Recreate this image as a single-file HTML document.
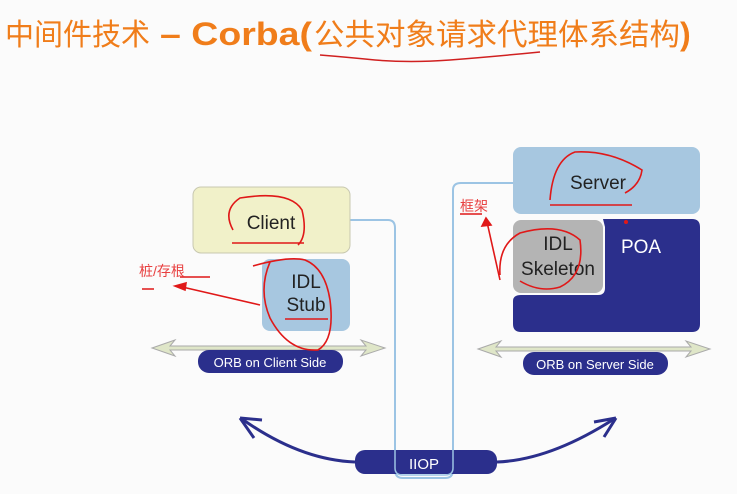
<!DOCTYPE html><html><head><meta charset="utf-8"><style>
body{margin:0;background:#fbfbfb;width:737px;height:494px;overflow:hidden}
svg{display:block}
text{font-family:"Liberation Sans","Noto Sans CJK SC",sans-serif}
</style></head><body>
<svg width="737" height="494" viewBox="0 0 737 494">
<rect width="737" height="494" fill="#fbfbfb"/>
<text x="5" y="45" font-size="30" fill="#f07d1a" textLength="145" lengthAdjust="spacingAndGlyphs">中间件技术</text>
<text x="160" y="45" font-size="32" font-weight="bold" fill="#f07d1a" textLength="152" lengthAdjust="spacingAndGlyphs">– Corba(</text>
<text x="314" y="45" font-size="30" fill="#f07d1a" textLength="366" lengthAdjust="spacingAndGlyphs">公共对象请求代理体系结构</text>
<text x="680" y="45" font-size="32" font-weight="bold" fill="#f07d1a">)</text>
<path d="M320 55 Q345 57 375 60 Q410 63 450 60 Q500 56 540 52" stroke="#d02020" stroke-width="1.5" fill="none"/>
<path d="M350 220 H388 Q395 220 395 228 V470 Q395 478 403 478 H445 Q453 478 453 470 V190 Q453 183 461 183 H515" stroke="#9cc4e4" stroke-width="2" fill="none"/>
<g fill="#dfe6c8" stroke="#aaa" stroke-width="1">
<path d="M152 348 L175 340 L170 346 H366 L361 340 L385 348 L361 356 L366 350 H170 L175 356 Z"/>
<path d="M478 349 L501 341 L496 347 H691 L686 341 L710 349 L686 357 L691 351 H496 L501 357 Z"/>
</g>
<rect x="193" y="187" width="157" height="66" rx="8" fill="#f1f1c9" stroke="#c8c8b0"/>
<text x="271" y="229" font-size="19" text-anchor="middle" fill="#222">Client</text>
<rect x="262" y="259" width="88" height="72" rx="8" fill="#a7c7e0"/>
<text x="306" y="288" font-size="19" text-anchor="middle" fill="#222">IDL</text>
<text x="306" y="311" font-size="19" text-anchor="middle" fill="#222">Stub</text>
<rect x="198" y="350" width="145" height="23" rx="11" fill="#2b2f8c"/>
<text x="270" y="367" font-size="13" text-anchor="middle" fill="#fff">ORB on Client Side</text>
<rect x="513" y="147" width="187" height="67" rx="8" fill="#a7c7e0"/>
<text x="598" y="189" font-size="19" text-anchor="middle" fill="#222">Server</text>
<path d="M603 219 H692 Q700 219 700 227 V324 Q700 332 692 332 H521 Q513 332 513 324 V301 Q513 295 521 295 H598 Q605 295 605 288 V227 Q603 219 603 219 Z" fill="#2b2f8c"/>
<rect x="513" y="220" width="90" height="73" rx="8" fill="#b4b4b4"/>
<text x="558" y="250" font-size="19" text-anchor="middle" fill="#222">IDL</text>
<text x="558" y="275" font-size="19" text-anchor="middle" fill="#222">Skeleton</text>
<text x="641" y="253" font-size="19" text-anchor="middle" fill="#fff">POA</text>
<rect x="523" y="352" width="145" height="23" rx="11" fill="#2b2f8c"/>
<text x="595" y="369" font-size="13" text-anchor="middle" fill="#fff">ORB on Server Side</text>
<path d="M355 462 Q300 460 242 419 M497 462 Q550 460 614 419" stroke="#2b2f8c" stroke-width="3" fill="none"/>
<path d="M240 418 L262 420 M240 418 L254 438 M616 418 L594 422 M616 418 L604 437" stroke="#2b2f8c" stroke-width="3" fill="none"/>
<rect x="355" y="450" width="142" height="24" rx="10" fill="#2b2f8c"/>
<path d="M395 450 V468 Q395 475 403 475 H445 Q453 475 453 468 V450" stroke="#9cc4e4" stroke-width="1.5" fill="none"/>
<text x="424" y="469" font-size="15" text-anchor="middle" fill="#fff">IIOP</text>
<g stroke="#e01818" stroke-width="1.6" fill="none">
<path d="M233 230 Q222 210 240 198 Q290 190 302 210 Q308 235 298 245"/>
<path d="M232 243 H304"/>
<path d="M270 262 Q258 290 270 318 Q288 352 318 350 Q335 340 330 300 Q325 268 305 260 Q288 256 253 266"/>
<path d="M285 319 H328"/>
<path d="M260 305 L178 286"/>
<path d="M175 286 L186 283 L185 290 Z" fill="#e01818"/>
<path d="M142 289 H154 M180 277 H210"/>
<path d="M550 200 Q553 160 575 152 Q610 150 642 170 Q640 185 625 193"/>
<path d="M550 205 H632"/>
<path d="M500 275 Q498 245 520 233 Q560 222 580 240 Q585 275 560 287 Q540 293 520 281"/>
<path d="M500 280 L487 222"/>
<path d="M486 218 L482 226 L491 225 Z" fill="#e01818"/>
<path d="M460 214 H482"/>
</g>
<circle cx="626" cy="222" r="2" fill="#e01818"/>
<text x="139" y="276" font-size="14" fill="#e84040">桩/存根</text>
<text x="460" y="211" font-size="14" fill="#e84040">框架</text>
</svg>
</body></html>
